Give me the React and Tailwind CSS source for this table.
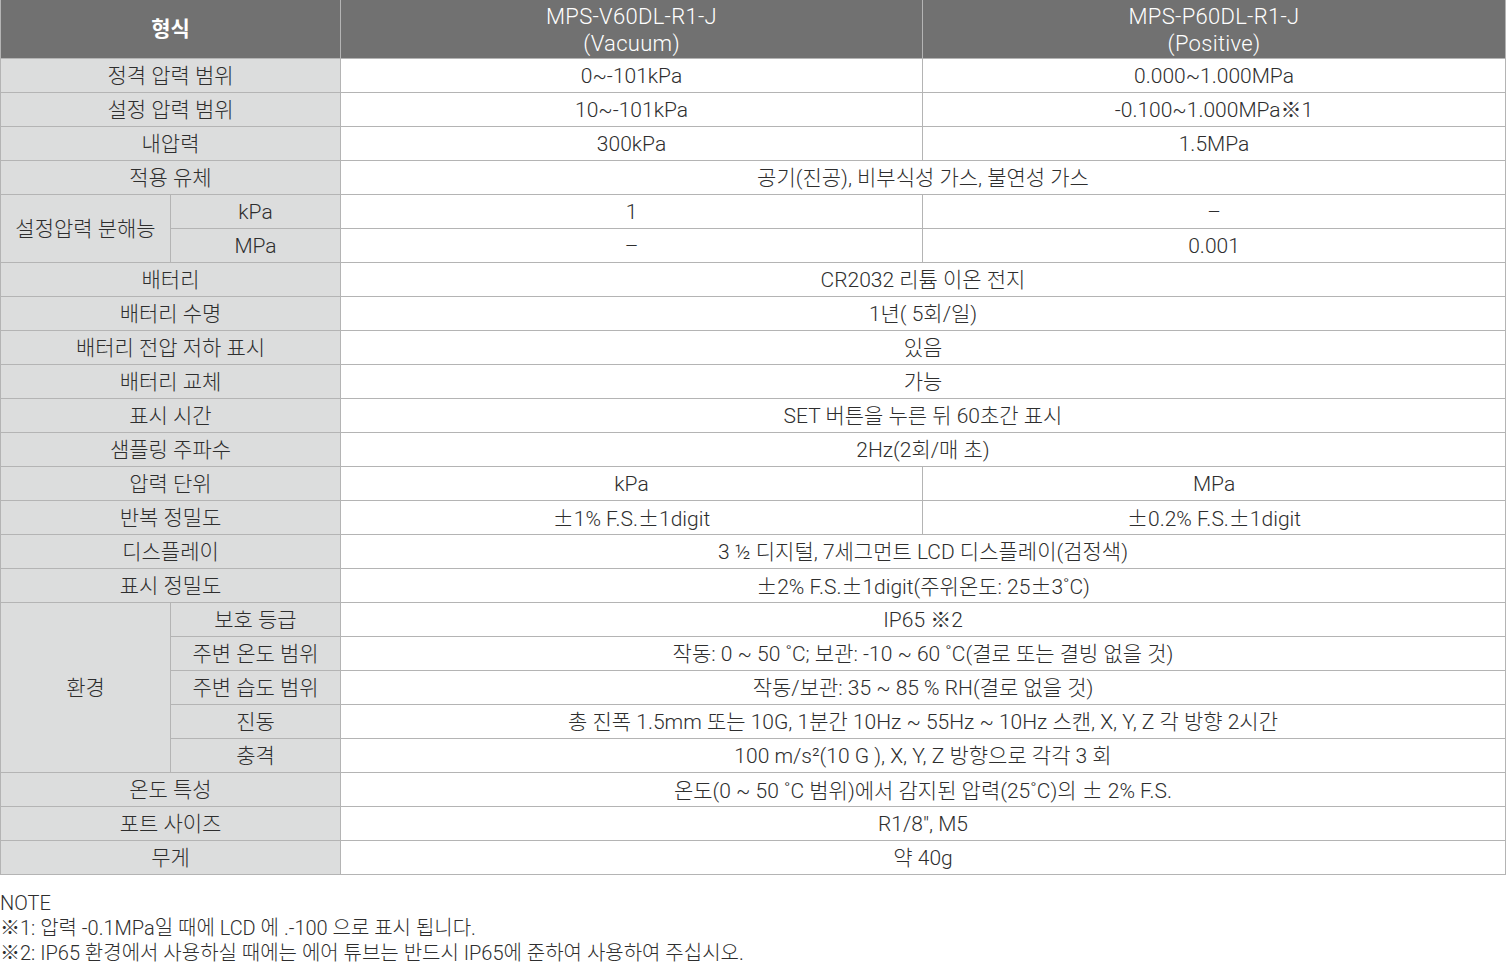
import React from 'react';

const td = 'border border-[#b4b4b4] text-center align-middle px-0 pt-[3px] pb-0 h-[34px] whitespace-nowrap';
const lab = `${td} bg-[#dcdddd]`;

const simple = [
    ['정격 압력 범위', '0~-101kPa', '0.000~1.000MPa'],
    ['설정 압력 범위', '10~-101kPa', '-0.100~1.000MPa※1'],
    ['내압력', '300kPa', '1.5MPa'],
    ['적용 유체', '공기(진공), 비부식성 가스, 불연성 가스'],
];

const middle = [
    ['배터리', 'CR2032 리튬 이온 전지'],
    ['배터리 수명', '1년( 5회/일)'],
    ['배터리 전압 저하 표시', '있음'],
    ['배터리 교체', '가능'],
    ['표시 시간', 'SET 버튼을 누른 뒤 60초간 표시'],
    ['샘플링 주파수', '2Hz(2회/매 초)'],
    ['압력 단위', 'kPa', 'MPa'],
    ['반복 정밀도', '±1% F.S.±1digit', '±0.2% F.S.±1digit'],
    ['디스플레이', '3 ½ 디지털, 7세그먼트 LCD 디스플레이(검정색)'],
    ['표시 정밀도', '±2% F.S.±1digit(주위온도: 25±3˚C)'],
];

const env = [
    ['보호 등급', 'IP65 ※2'],
    ['주변 온도 범위', '작동: 0 ~ 50 ˚C; 보관: -10 ~ 60 ˚C(결로 또는 결빙 없을 것)'],
    ['주변 습도 범위', '작동/보관: 35 ~ 85 % RH(결로 없을 것)'],
    ['진동', '총 진폭 1.5mm 또는 10G, 1분간 10Hz ~ 55Hz ~ 10Hz 스캔, X, Y, Z 각 방향 2시간'],
    ['충격', '100 m/s²(10 G ), X, Y, Z 방향으로 각각 3 회'],
];

const tail = [
    ['온도 특성', '온도(0 ~ 50 ˚C 범위)에서 감지된 압력(25˚C)의 ± 2% F.S.'],
    ['포트 사이즈', 'R1/8", M5'],
    ['무게', '약 40g'],
];

// ± takes the wide glyph from the Korean font, as in the source sheet
const fmt = s => s.split('±').flatMap((part, i) =>
    i === 0 ? [part] : [<span key={i} className="font-['Noto_Sans_CJK_KR']">±</span>, part]
);

const Row = ({ r }) => (
    <tr>
        <td colSpan={2} className={lab}>{r[0]}</td>
        {r.length === 2 ? (
            <td colSpan={2} className={td}>{fmt(r[1])}</td>
        ) : (
            <>
                <td className={td}>{fmt(r[1])}</td>
                <td className={td}>{fmt(r[2])}</td>
            </>
        )}
    </tr>
);

export default function App() {
    return (
        <div className="w-[1506px] bg-white text-[#2e2e2e] text-[21px] leading-[27px] font-light" style={{ fontFamily: 'Roboto, "Noto Sans CJK KR", sans-serif' }}>
            <table className="w-[1505px] border-collapse table-fixed">
                <colgroup>
                    <col className="w-[170px]" />
                    <col className="w-[170px]" />
                    <col className="w-[582px]" />
                    <col className="w-[583px]" />
                </colgroup>
                <thead>
                    <tr className="bg-[#717171] text-white">
                        <th colSpan={2} className="h-[58px] pt-[2px] border border-[#b4b4b4] border-t-0 font-bold">형식</th>
                        <th className="pt-[2px] border border-[#b4b4b4] border-t-0 font-light text-[22px] tracking-[0.3px]">MPS-V60DL-R1-J<br />(Vacuum)</th>
                        <th className="pt-[2px] border border-[#b4b4b4] border-t-0 font-light text-[22px] tracking-[0.3px]">MPS-P60DL-R1-J<br />(Positive)</th>
                    </tr>
                </thead>
                <tbody>
                    {simple.map(r => <Row key={r[0]} r={r} />)}
                    <tr>
                        <td rowSpan={2} className={lab}>설정압력 분해능</td>
                        <td className={lab}>kPa</td>
                        <td className={td}>1</td>
                        <td className={td}>–</td>
                    </tr>
                    <tr>
                        <td className={lab}>MPa</td>
                        <td className={td}>–</td>
                        <td className={td}>0.001</td>
                    </tr>
                    {middle.map(r => <Row key={r[0]} r={r} />)}
                    {env.map((r, i) => (
                        <tr key={r[0]}>
                            {i === 0 && <td rowSpan={5} className={lab}>환경</td>}
                            <td className={lab}>{r[0]}</td>
                            <td colSpan={2} className={td}>{r[1]}</td>
                        </tr>
                    ))}
                    {tail.map(r => <Row key={r[0]} r={r} />)}
                </tbody>
            </table>
            <div className="pt-[16px] text-[20px] leading-[25px]">
                <p>NOTE</p>
                <p>※1: 압력 -0.1MPa일 때에 LCD 에 .-100 으로 표시 됩니다.</p>
                <p>※2: IP65 환경에서 사용하실 때에는 에어 튜브는 반드시 IP65에 준하여 사용하여 주십시오.</p>
            </div>
        </div>
    );
}
